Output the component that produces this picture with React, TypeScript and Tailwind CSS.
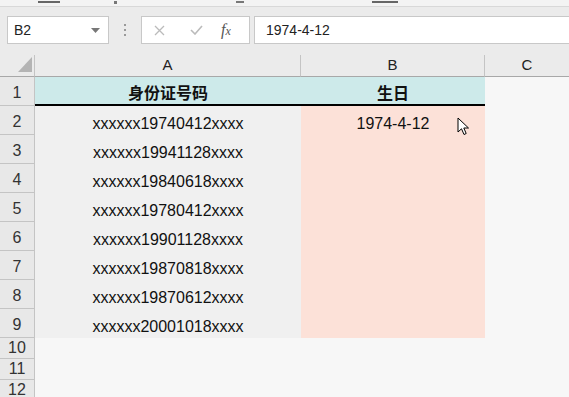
import React from "react";

const ids = [
  "xxxxxx19740412xxxx",
  "xxxxxx19941128xxxx",
  "xxxxxx19840618xxxx",
  "xxxxxx19780412xxxx",
  "xxxxxx19901128xxxx",
  "xxxxxx19870818xxxx",
  "xxxxxx19870612xxxx",
  "xxxxxx20001018xxxx",
];

function Cursor() {
  return (
    <svg
      className="absolute left-[457px] top-[117px]"
      width="14"
      height="20"
      viewBox="0 0 14 20"
    >
      <path
        d="M1 1 L1 15 L4.5 11.8 L7 17.5 L9.2 16.5 L6.8 11 L11.5 11 Z"
        fill="#fff"
        stroke="#000"
        strokeWidth="1"
        strokeLinejoin="round"
      />
    </svg>
  );
}

function RowHead({ n }: { n: number }) {
  return (
    <div className="h-[29px] flex items-end justify-center pb-[4px] leading-[16px] bg-[#e8e8e8] border-r border-b border-[#c4c4c4] text-[16px] text-[#333]">
      {n}
    </div>
  );
}

export default function App() {
  const font = { fontFamily: '"Liberation Sans", "Noto Sans CJK SC", sans-serif' };
  return (
    <div className="relative w-[569px] h-[397px] overflow-hidden bg-[#f7f7f7]" style={font}>
      {/* ribbon remnant: only the bottoms of the group labels peek through */}
      <div className="h-[7px] bg-[#f3f3f3] border-b border-[#d8d8d8] flex items-start pt-[1px]">
        <span className="ml-[38px] w-[22px] h-[2px] bg-[#666]" />
        <span className="ml-[54px] w-[3px] h-[3px] bg-[#777]" />
        <span className="ml-[119px] w-[8px] h-[2px] bg-[#777]" />
        <span className="ml-[128px] w-[26px] h-[2px] bg-[#666]" />
      </div>

      {/* formula bar */}
      <div className="h-[48px] bg-[#ebebeb] flex items-start pt-[9px] pl-[7px]">
        <div className="w-[102px] h-[28px] bg-white border border-[#c8c8c8] flex items-center pl-[6px] pr-[8px] justify-between">
          <span className="text-[14px] text-[#222]">B2</span>
          <svg width="9" height="5" viewBox="0 0 9 5">
            <path d="M0 0 L9 0 L4.5 5 Z" fill="#777" />
          </svg>
        </div>
        <div className="w-[32px] h-[28px] flex flex-col items-center justify-center gap-[3px]">
          <span className="w-[2px] h-[2px] bg-[#999]" />
          <span className="w-[2px] h-[2px] bg-[#999]" />
          <span className="w-[2px] h-[2px] bg-[#999]" />
        </div>
        <div className="w-[109px] h-[28px] bg-white border border-[#c8c8c8] flex items-center">
          <svg className="ml-[12px]" width="11" height="11" viewBox="0 0 11 11">
            <path d="M1 1 L10 10 M10 1 L1 10" stroke="#bbb" strokeWidth="1.3" />
          </svg>
          <svg className="ml-[25px]" width="13" height="10" viewBox="0 0 13 10">
            <path d="M1 5 L5 9 L12 1" stroke="#bbb" strokeWidth="1.6" fill="none" />
          </svg>
          <span
            className="ml-[18px] text-[16px] italic text-[#555]"
            style={{ fontFamily: '"Liberation Serif", serif' }}
          >
            f<span className="text-[12px]">x</span>
          </span>
        </div>
        <div className="ml-[4px] flex-1 h-[28px] bg-white border border-[#c8c8c8] border-r-0 flex items-center pl-[11px] text-[14px] text-[#222]">
          1974-4-12
        </div>
      </div>

      {/* sheet */}
      <div className="grid grid-cols-[35px_266px_184px_1fr]">
        {/* column headers */}
        <div className="h-[22px] bg-[#ebebeb] border-r border-b border-[#a8a8a8] border-r-[#c4c4c4] relative">
          <svg className="absolute left-[18px] top-[2px]" width="14" height="15" viewBox="0 0 14 15">
            <path d="M14 0 L14 15 L0 15 Z" fill="#b4b4b4" />
          </svg>
        </div>
        {["A", "B", "C"].map((c, i) => (
          <div
            key={c}
            className={`h-[22px] bg-[#ebebeb] border-b border-[#a8a8a8] ${
              i < 2 ? "border-r border-r-[#c4c4c4]" : ""
            } flex items-center justify-center text-[15px] text-[#222]`}
          >
            {c}
          </div>
        ))}

        {/* row 1 */}
        <RowHead n={1} />
        <div className="h-[29px] bg-[#cdeaea] border-b-2 border-black flex items-end justify-center pb-[2px] leading-[16px] text-[16px] font-bold text-[#111]">
          身份证号码
        </div>
        <div className="h-[29px] bg-[#cdeaea] border-b-2 border-black flex items-end justify-center pb-[2px] leading-[16px] text-[16px] font-bold text-[#111]">
          生日
        </div>
        <div className="h-[29px]" />

        {ids.map((id, i) => (
          <React.Fragment key={id + i}>
            <RowHead n={i + 2} />
            <div className="h-[29px] bg-[#f0f0f0] flex items-end justify-center pb-[3px] leading-[16px] text-[16px] text-[#111]">
              {id}
            </div>
            <div className="h-[29px] bg-[#fce1d8] flex items-end justify-center pb-[3px] leading-[16px] text-[16px] text-[#111]">
              {i === 0 ? "1974-4-12" : ""}
            </div>
            <div className="h-[29px]" />
          </React.Fragment>
        ))}

        {[10, 11, 12].map((n) => (
          <React.Fragment key={n}>
            <div className="h-[21px] flex items-center justify-center bg-[#e8e8e8] border-r border-b border-[#c4c4c4] text-[16px] text-[#333]">
              {n}
            </div>
            <div className="h-[21px]" />
            <div className="h-[21px]" />
            <div className="h-[21px]" />
          </React.Fragment>
        ))}
      </div>

      <Cursor />
    </div>
  );
}
